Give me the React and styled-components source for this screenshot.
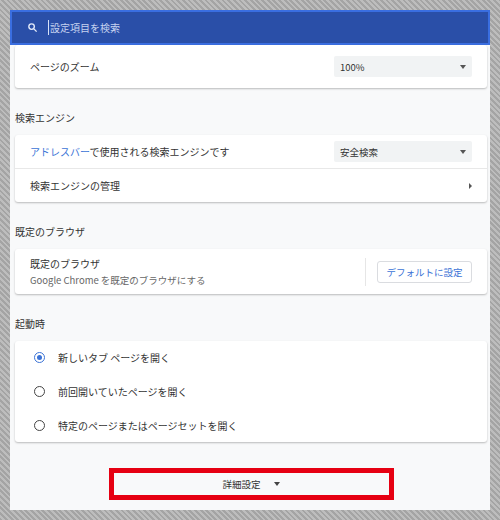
import styled, { createGlobalStyle } from "styled-components";

const Global = createGlobalStyle`
  html, body { margin: 0; padding: 0; }
  body {
    width: 500px; height: 520px; overflow: hidden;
    font-family: "Noto Sans CJK JP", "Liberation Sans", sans-serif;
    background: repeating-linear-gradient(45deg, #a4a4a4 0 2px, #bdbdbd 2px 4px);
  }
`;

const Frame = styled.div`
  margin: 10px;
  width: 480px;
  height: 500px;
  background: #f8f9fa;
  display: flex;
  flex-direction: column;
  overflow: hidden;
`;

const SearchBar = styled.div`
  height: 31px;
  flex: none;
  background: #2a4fa8;
  border: 2px solid #3a6ee0;
  display: flex;
  align-items: center;
  gap: 10px;
  padding: 0 16px 0 15px;
  color: #c6d3f0;
  font-size: 10px;
`;

const Caret = styled.span`
  border-left: 1px solid #d8e2f7;
  padding-left: 1px;
`;

const Body = styled.div`
  padding: 0 3px 0 5px;
  display: flex;
  flex-direction: column;
`;

const Card = styled.div`
  background: #fff;
  border-radius: 3px;
  box-shadow: 0 1px 2px rgba(0,0,0,0.25);
`;

const Row = styled.div`
  height: ${p => p.$h || 33}px;
  display: flex;
  align-items: center;
  padding: 0 15px;
  font-size: 10px;
  color: #333;
  border-top: ${p => (p.$divider ? "1px solid #e8e8e8" : "none")};
  gap: ${p => p.$gap || 0}px;
`;

const Grow = styled.div`
  flex: 1;
`;

const Select = styled.div`
  width: 126px;
  height: 21px;
  background: #f1f3f4;
  border-radius: 2px;
  display: flex;
  align-items: center;
  justify-content: space-between;
  padding: 0 6px;
  font-size: 9.5px;
  color: #333;
`;

const Tri = styled.span`
  width: 0; height: 0;
  border-left: 3.5px solid transparent;
  border-right: 3.5px solid transparent;
  border-top: 4px solid ${p => p.$c || "#555"};
`;

const Chevron = styled.span`
  width: 0; height: 0;
  border-top: 3px solid transparent;
  border-bottom: 3px solid transparent;
  border-left: 3px solid #555;
`;

const Link = styled.span`
  color: #3b73d6;
`;

const Heading = styled.div`
  font-size: 10px;
  color: #333;
  padding: 22px 0 10px;
`;

const Sub = styled.div`
  font-size: 9.5px;
  color: #666;
  margin-top: 2px;
`;

const Sep = styled.div`
  width: 1px;
  height: 28px;
  background: #e6e6e6;
  margin-right: 11px;
`;

const Button = styled.div`
  width: 93px;
  height: 20px;
  border: 1px solid #dadce0;
  border-radius: 3px;
  color: #3b73d6;
  font-size: 9.5px;
  display: flex;
  align-items: center;
  justify-content: center;
`;

const Radio = styled.span`
  width: 9px; height: 9px;
  border-radius: 50%;
  border: 1.5px solid ${p => (p.$on ? "#3b73d6" : "#444")};
  display: flex; align-items: center; justify-content: center;
  margin-left: 4px;
  &::after {
    content: "";
    width: 5px; height: 5px; border-radius: 50%;
    background: ${p => (p.$on ? "#3b73d6" : "transparent")};
  }
`;

const Advanced = styled.div`
  margin: 26px auto 0;
  width: 275px;
  height: 22px;
  border: 5px solid #e60012;
  display: flex;
  align-items: center;
  justify-content: center;
  gap: 13px;
  font-size: 9.5px;
  color: #333;
`;

const SearchIcon = () => (
  <svg width="11" height="11" viewBox="0 0 24 24" fill="none" stroke="#e4ebfa" strokeWidth="3">
    <circle cx="10" cy="10" r="6" />
    <path d="M15 15l6 6" />
  </svg>
);

const startup = ["新しいタブ ページを開く", "前回開いていたページを開く", "特定のページまたはページセットを開く"];

export default function App() {
  return (
    <>
      <Global />
      <Frame>
        <SearchBar>
          <SearchIcon />
          <Caret>設定項目を検索</Caret>
        </SearchBar>
        <Body>
          <Card>
            <Row $h={43}>
              <Grow>ページのズーム</Grow>
              <Select>100%<Tri /></Select>
            </Row>
          </Card>
          <Heading>検索エンジン</Heading>
          <Card>
            <Row>
              <Grow><Link>アドレスバー</Link>で使用される検索エンジンです</Grow>
              <Select>安全検索<Tri /></Select>
            </Row>
            <Row $divider>
              <Grow>検索エンジンの管理</Grow>
              <Chevron />
            </Row>
          </Card>
          <Heading>既定のブラウザ</Heading>
          <Card>
            <Row $h={45}>
              <Grow>
                <div>既定のブラウザ</div>
                <Sub>Google Chrome を既定のブラウザにする</Sub>
              </Grow>
              <Sep />
              <Button>デフォルトに設定</Button>
            </Row>
          </Card>
          <Heading>起動時</Heading>
          <Card>
            {startup.map((t, i) => (
              <Row key={t} $h={i === 1 ? 34 : 33.5} $gap={13}>
                <Radio $on={i === 0} />
                {t}
              </Row>
            ))}
          </Card>
          <Advanced>
            詳細設定<Tri $c="#444" />
          </Advanced>
        </Body>
      </Frame>
    </>
  );
}
